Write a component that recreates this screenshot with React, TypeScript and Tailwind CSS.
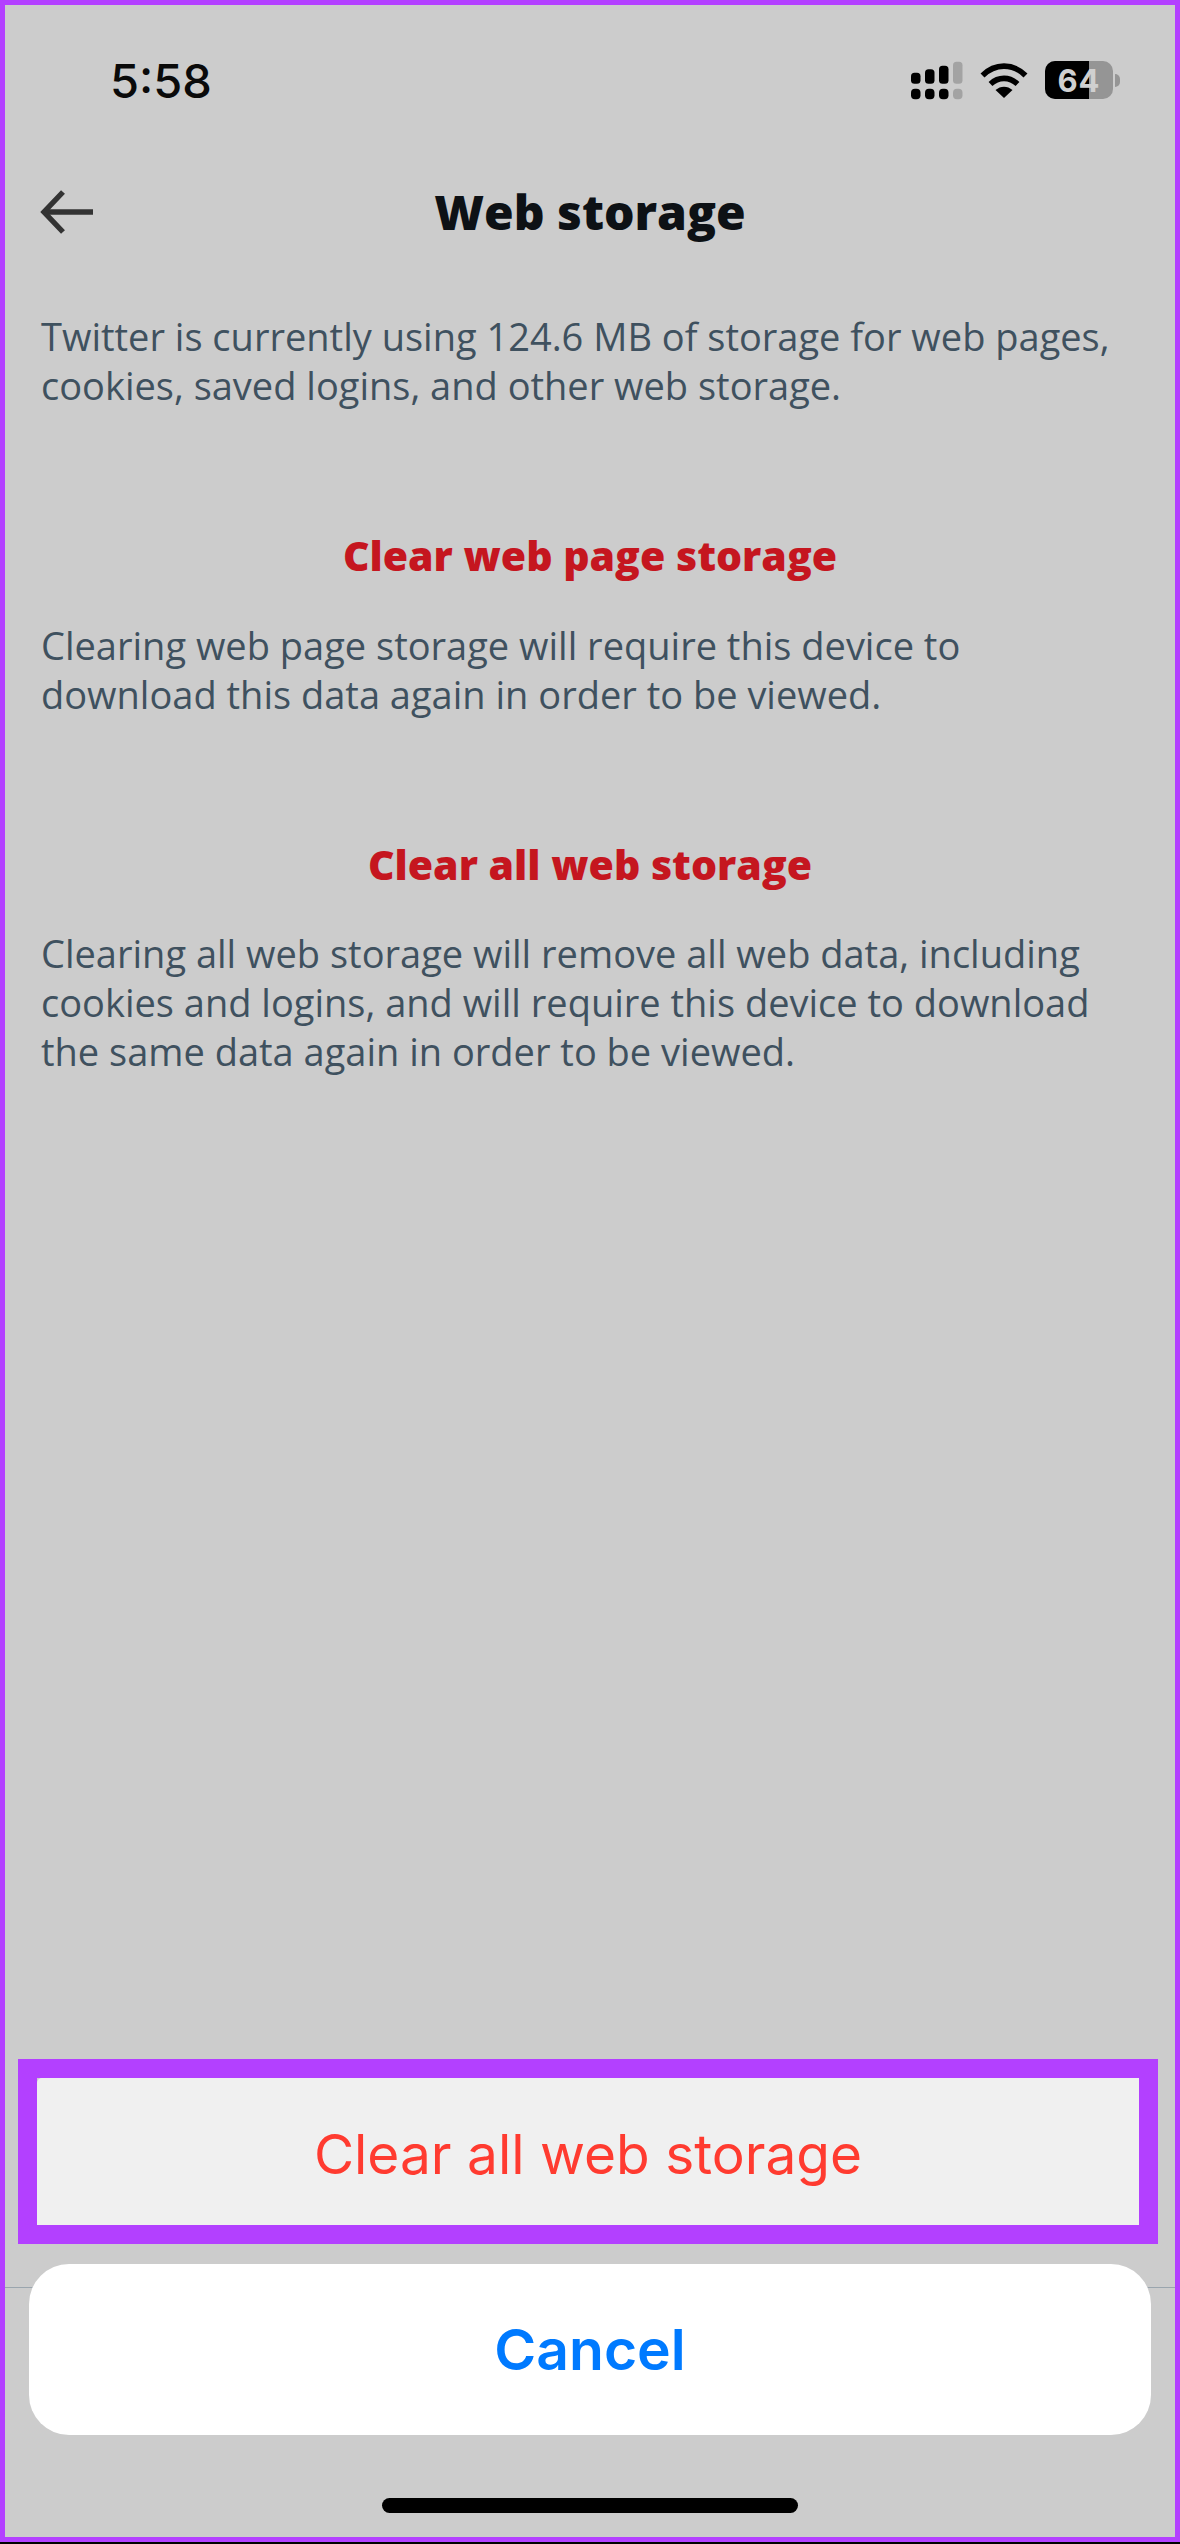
import React from "react";

const SignalIcon = () => (
  <svg width="52" height="39" viewBox="0 0 52 39">
    <rect x="0" y="11.7" width="9.5" height="11" rx="3.5" fill="#000" />
    <rect x="14" y="8.3" width="9.5" height="14.4" rx="3.5" fill="#000" />
    <rect x="28" y="4.7" width="9.5" height="18" rx="3.5" fill="#000" />
    <rect x="42" y="0.7" width="9.5" height="22" rx="3.5" fill="#a3a3a3" />
    <rect x="0" y="27.7" width="9.5" height="10.6" rx="4" fill="#000" />
    <rect x="14" y="27.7" width="9.5" height="10.6" rx="4" fill="#000" />
    <rect x="28" y="27.7" width="9.5" height="10.6" rx="4" fill="#000" />
    <rect x="42" y="27.7" width="9.5" height="10.6" rx="4" fill="#a3a3a3" />
  </svg>
);

const WifiIcon = () => (
  <svg width="48" height="36" viewBox="0 0 48 36">
    <path d="M2.5 13.5 C15 1 33 1 45.5 13.5" fill="none" stroke="#000" strokeWidth="5.6" />
    <path d="M10.5 22 C18.5 14.5 29.5 14.5 37.5 22" fill="none" stroke="#000" strokeWidth="5.6" />
    <path d="M24 36 L15.5 28 C20.5 23.5 27.5 23.5 32.5 28 Z" fill="#000" />
  </svg>
);

const BatteryIcon = () => (
  <div className="flex items-center gap-[2px]">
    <div className="relative h-[38px] w-[68px] overflow-hidden rounded-[10px] bg-[#959595]">
      <div className="h-full w-[44px] bg-black" />
      <span className="absolute inset-0 flex items-center justify-center font-['Inter',sans-serif] text-[31px] font-bold leading-none tracking-[1px] text-[#d0d0d0]">
        64
      </span>
    </div>
    <div className="h-[13px] w-[5px] rounded-r-full bg-[#959595]" />
  </div>
);

const BackArrow = () => (
  <svg width="54" height="44" viewBox="0 0 54 44" fill="none" stroke="#333" strokeWidth="5.4">
    <path d="M53 22 H4" />
    <path d="M23 2 L4 22 L23 42" />
  </svg>
);

const bodyText = "px-[36px] text-[38px] leading-[49px] text-[#3f515f]";
const linkText = "text-center text-[41px] font-extrabold leading-[50px] text-[#c5161f]";

export default function App() {
  return (
    <div className="h-[2544px] w-[1180px] bg-black pb-[2px] font-['Open_Sans',sans-serif]">
      <div className="flex h-full flex-col border-[5px] border-[#b340ff] bg-[#cccccc]">
        {/* status bar */}
        <div className="flex h-[150px] shrink-0 items-center justify-between pl-[105px] pr-[55px]">
          <span className="font-['Inter',sans-serif] text-[47px] font-medium leading-none text-[#0a0a0a]">5:58</span>
          <div className="flex items-center gap-[17px]">
            <SignalIcon />
            <WifiIcon />
            <BatteryIcon />
          </div>
        </div>

        {/* header */}
        <div className="flex h-[114px] shrink-0 items-center pl-[35px] pr-[36px]">
          <BackArrow />
          <h1 className="flex-1 pr-[53px] text-center text-[48px] font-extrabold leading-none text-[#0d1115]">Web storage</h1>
        </div>

        <p className={`${bodyText} mt-[43px]`}>
          Twitter is currently using 124.6 MB of storage for web pages,
          <br />
          cookies, saved logins, and other web storage.
        </p>

        <div className={`${linkText} mt-[120px]`}>Clear web page storage</div>
        <p className={`${bodyText} mt-[41px]`}>
          Clearing web page storage will require this device to
          <br />
          download this data again in order to be viewed.
        </p>

        <div className={`${linkText} mt-[120px]`}>Clear all web storage</div>
        <p className={`${bodyText} mt-[40px]`}>
          Clearing all web storage will remove all web data, including
          <br />
          cookies and logins, and will require this device to download
          <br />
          the same data again in order to be viewed.
        </p>

        <div className="flex-1" />

        {/* highlighted action */}
        <div className="ml-[13px] mr-[17px] bg-[#b340ff] p-[19px]">
          <div className="bg-[#cccccc]">
            <div className="flex h-[147px] items-center justify-center rounded-tl-[5px] bg-[#f0f0f0] pt-[5px] font-['Inter',sans-serif] text-[55px] leading-none text-[#ff3b30]">
              Clear all web storage
            </div>
          </div>
        </div>

        {/* cancel sits over the divider */}
        <div className="relative mt-[20px] px-[24px]">
          <div className="absolute inset-x-0 top-[23px] h-px bg-[#9aa5ae]" />
          <div className="relative flex h-[171px] items-center justify-center rounded-[40px] bg-white font-['Inter',sans-serif] text-[57px] font-semibold leading-none text-[#007aff]">
            Cancel
          </div>
        </div>

        <div className="flex h-[102px] shrink-0 items-end justify-center pb-[24px]">
          <div className="h-[15px] w-[416px] rounded-full bg-black" />
        </div>
      </div>
    </div>
  );
}
